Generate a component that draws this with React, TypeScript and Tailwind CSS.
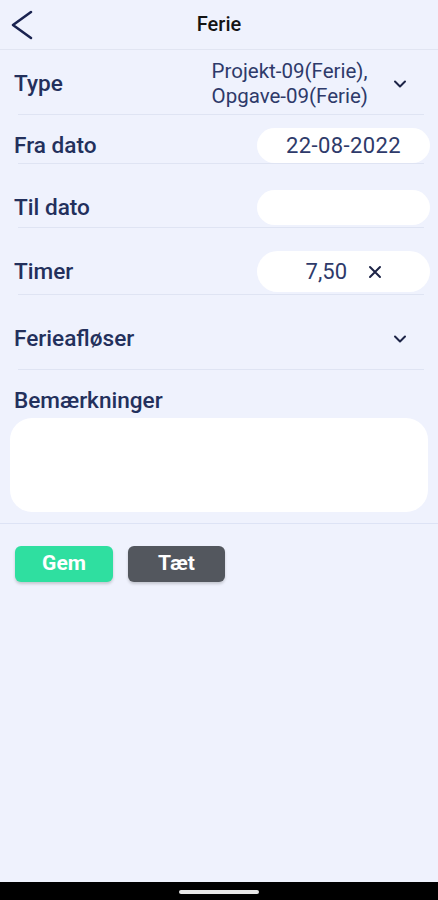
import React from "react";

const font = { fontFamily: "Roboto, 'Noto Sans', sans-serif" };

const label = "text-[22.6px] font-medium text-[#23305c] leading-[26px]";

function ChevronDown() {
  return (
    <svg width="14" height="10" viewBox="0 0 14 10" className="text-[#1d2447]">
      <path d="M2 2.5 L7 7.5 L12 2.5" fill="none" stroke="currentColor" strokeWidth="2" strokeLinecap="round" strokeLinejoin="round" />
    </svg>
  );
}

function Sep() {
  return <div className="h-px bg-[#dfe4f3] ml-[18px] mr-[14px]" />;
}

export default function App() {
  return (
    <div className="h-screen w-full flex flex-col bg-[#eff2fd] overflow-hidden" style={font}>
      {/* Header */}
      <div className="h-[50px] relative flex items-center justify-center border-b border-[#e1e5f2] shrink-0">
        <div className="absolute left-[10px] top-[9px]">
          <svg width="26" height="32" viewBox="0 0 26 32">
            <path d="M21 3 L3 16 L21 29" fill="none" stroke="#1a2350" strokeWidth="2.6" strokeLinecap="round" strokeLinejoin="round" />
          </svg>
        </div>
        <span className="text-[20px] font-medium text-[#141414] leading-none -mt-[2px]">Ferie</span>
      </div>

      {/* Type */}
      <div className="h-[64px] flex items-center pl-[14px] pr-[31px] pt-[3px]">
        <span className={`${label} flex-1`}>Type</span>
        <div className="text-[20.5px] leading-[25px] text-[#2e3a6a] mr-[25px]">
          <div>Projekt-09(Ferie),</div>
          <div>Opgave-09(Ferie)</div>
        </div>
        <ChevronDown />
      </div>
      <Sep />

      {/* Fra dato */}
      <div className="h-[48px] flex items-center pl-[14px] pr-[8px] pt-[13px]">
        <span className={`${label} flex-1`}>Fra dato</span>
        <div className="w-[173px] h-[35px] rounded-full bg-white flex items-center justify-end pr-[29px] text-[22px] text-[#2e3a6a] tracking-[0.4px]">
          22-08-2022
        </div>
      </div>
      <Sep />

      {/* Til dato */}
      <div className="h-[63px] flex items-center pl-[14px] pr-[8px] pt-[26px] pb-[2px]">
        <span className={`${label} flex-1`}>Til dato</span>
        <div className="w-[173px] h-[35px] rounded-full bg-white" />
      </div>
      <Sep />

      {/* Timer */}
      <div className="h-[66px] flex items-center pl-[14px] pr-[8px] pt-[23px] pb-[2px]">
        <span className={`${label} flex-1`}>Timer</span>
        <div className="w-[173px] h-[41px] rounded-full bg-white flex items-center justify-end pr-[48px] text-[22px] text-[#2e3a6a]">
          <span>7,50</span>
          <svg width="14" height="14" viewBox="0 0 14 14" className="ml-[21px]">
            <path d="M2 2 L12 12 M12 2 L2 12" fill="none" stroke="#1d2447" strokeWidth="2" strokeLinecap="round" />
          </svg>
        </div>
      </div>
      <Sep />

      {/* Ferieafløser */}
      <div className="h-[74px] flex items-center pl-[14px] pr-[31px] pt-[14px]">
        <span className={`${label} flex-1`}>Ferieafløser</span>
        <ChevronDown />
      </div>
      <Sep />

      {/* Bemærkninger */}
      <div className="pl-[14px] pt-[18px]">
        <span className={`${label} block`}>Bemærkninger</span>
      </div>
      <div className="mx-[10px] mt-[4px] h-[94px] rounded-[22px] bg-white" />
      <div className="h-px bg-[#dde3f5] mt-[11px]" />

      {/* Buttons */}
      <div className="flex gap-[15px] pl-[15px] pt-[22px]">
        <button className="w-[98px] h-[36px] rounded-[6px] bg-[#2fdfa0] text-white text-[21px] font-bold shadow-[0_2px_3px_rgba(0,0,0,0.18)]">
          Gem
        </button>
        <button className="w-[97px] h-[36px] rounded-[6px] bg-[#53575e] text-white text-[21px] font-bold shadow-[0_2px_3px_rgba(0,0,0,0.18)]">
          Tæt
        </button>
      </div>

      <div className="flex-1" />

      {/* Android nav bar */}
      <div className="h-[18px] bg-black flex items-start justify-center shrink-0">
        <div className="mt-[8px] w-[80px] h-[4px] rounded-full bg-[#e8e8e8]" />
      </div>
    </div>
  );
}
